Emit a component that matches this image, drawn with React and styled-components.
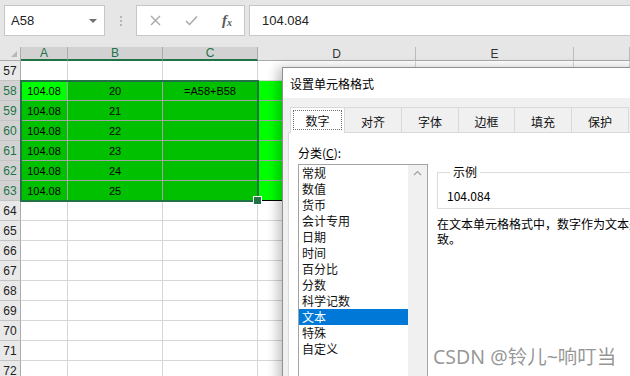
import React from 'react';
import styled, { createGlobalStyle } from 'styled-components';

const Global = createGlobalStyle`
  html, body { margin: 0; padding: 0; background: #fff; }
  * { box-sizing: border-box; }
`;

const Root = styled.div`
  position: relative;
  width: 630px;
  height: 376px;
  overflow: hidden;
  background: #e6e6e6;
  display: flex;
  flex-direction: column;
  font-family: "Liberation Sans", Arial, sans-serif;
`;

/* ---------- formula bar ---------- */
const FormulaBar = styled.div`
  flex: none;
  height: 36px;
  display: flex;
  align-items: stretch;
  padding: 5px 0 0 4px;
`;

const Field = styled.div`
  background: #fff;
  border: 1px solid #c6c6c6;
  display: flex;
  align-items: center;
`;

const NameBox = styled(Field)`
  width: 101px;
  justify-content: space-between;
  padding: 0 7px 0 6px;
  font-size: 13px;
  color: #222;
`;

const Caret = styled.span`
  width: 0;
  height: 0;
  border-left: 4px solid transparent;
  border-right: 4px solid transparent;
  border-top: 4px solid #707070;
`;

const Grip = styled.div`
  width: 31px;
  display: flex;
  flex-direction: column;
  align-items: center;
  justify-content: center;
  gap: 2px;
  span { width: 2px; height: 2px; background: #b5b5b5; }
`;

const FxBox = styled(Field)`
  width: 109px;
  display: grid;
  grid-template-columns: repeat(3, 36px);
  align-items: center;
  justify-items: center;
`;

const Fx = styled.span`
  font-family: "Liberation Serif", "Times New Roman", serif;
  font-style: italic;
  font-weight: bold;
  font-size: 15px;
  color: #5a5a5a;
  sub { font-size: 10px; vertical-align: -1px; }
`;

const FormulaInput = styled(Field)`
  flex: 1;
  margin-left: 4px;
  border-right: none;
  padding-left: 12px;
  font-size: 13px;
  color: #222;
`;

/* ---------- sheet ---------- */
const Sheet = styled.div`
  position: relative;
  flex: 1;
  margin-top: 11px;
  display: grid;
  grid-template-columns: 21px 47px 95px 95px 158px 158px 1fr;
  grid-template-rows: 14px;
  grid-auto-rows: 20px;
  align-content: start;
  background: #fff;
  overflow: hidden;
`;

const Corner = styled.div`
  position: relative;
  background: #e6e6e6;
  border-right: 1px solid #ababab;
  border-bottom: 1px solid #ababab;
  &::after {
    content: "";
    position: absolute;
    right: 3px;
    bottom: 3px;
    width: 0;
    height: 0;
    border-left: 6px solid transparent;
    border-bottom: 6px solid #b8b8b8;
  }
`;

const ColHead = styled.div`
  display: flex;
  align-items: center;
  justify-content: center;
  font-size: 12px;
  background: ${p => (p.$sel ? '#d2d2d2' : '#e6e6e6')};
  color: ${p => (p.$sel ? '#217346' : '#333')};
  border-right: 1px solid ${p => (p.$sel ? '#ababab' : '#bcbcbc')};
  border-bottom: ${p => (p.$sel ? '2px solid #217346' : '1px solid #ababab')};
`;

const RowHead = styled.div`
  display: flex;
  align-items: flex-end;
  justify-content: center;
  padding-bottom: 2px;
  font-size: 12px;
  background: ${p => (p.$sel ? '#d2d2d2' : '#e9e9e9')};
  color: ${p => (p.$sel ? '#217346' : '#222')};
  border-right: 1px solid ${p => (p.$sel ? '#217346' : '#ababab')};
  border-bottom: 1px solid #c4c4c4;
`;

const toneBg = { sel: '#00c000', fill: '#00ff00' };

const Cell = styled.div`
  display: flex;
  align-items: center;
  justify-content: center;
  padding-top: 1px;
  font-size: 11px;
  color: #000;
  white-space: nowrap;
  background: ${p => toneBg[p.$tone] || '#fff'};
  border-right: 1px solid ${p => (p.$tone ? '#a4a4a4' : '#d6d6d6')};
  border-bottom: 1px solid ${p => (p.$black ? '#000' : p.$tone ? '#a4a4a4' : '#d6d6d6')};
`;

const Selection = styled.div`
  position: absolute;
  grid-column: 2 / 5;
  grid-row: 3 / 9;
  top: -1px;
  left: -1px;
  right: -1px;
  bottom: -1px;
  border: 2px solid #217346;
  pointer-events: none;
  &::after {
    content: "";
    position: absolute;
    right: -5px;
    bottom: -5px;
    width: 7px;
    height: 7px;
    background: #217346;
    border: 1px solid #fff;
  }
`;

/* ---------- dialog ---------- */
const Dialog = styled.div`
  position: absolute;
  left: 282px;
  top: 67px;
  width: 480px;
  height: 330px;
  display: flex;
  flex-direction: column;
  background: #f0f0f0;
  border-left: 1px solid #8f8f8f;
  border-top: 1px solid #8f8f8f;
  box-shadow: -5px 0 10px rgba(0, 0, 0, 0.22);
  font-family: "Noto Sans CJK SC", "Noto Sans", sans-serif;
  font-size: 12px;
  color: #000;
`;

const TitleBar = styled.div`
  flex: none;
  height: 30px;
  display: flex;
  align-items: center;
  padding-left: 7px;
  background: #fff;
  font-size: 12px;
`;

const TabStrip = styled.div`
  flex: none;
  position: relative;
  z-index: 1;
  display: flex;
  align-items: flex-end;
  padding: 9px 0 0 7px;
`;

const Tab = styled.div`
  width: ${p => p.$w}px;
  height: ${p => (p.$active ? 26 : 25)}px;
  margin-bottom: ${p => (p.$active ? -1 : 0)}px;
  margin-left: -1px;
  &:first-child { margin-left: 0; }
  display: flex;
  align-items: stretch;
  padding: ${p => (p.$active ? '2px 2px 3px' : '2px 0 0')};
  background: ${p => (p.$active ? '#fff' : '#f0f0f0')};
  border: 1px solid #d9d9d9;
  border-bottom: none;
  color: #111;
`;

const TabLabel = styled.span`
  flex: 1;
  display: flex;
  align-items: center;
  justify-content: center;
  border: 1px dotted ${p => (p.$focus ? '#707070' : 'transparent')};
`;

const Panel = styled.div`
  flex: 1;
  margin-left: 5px;
  display: flex;
  gap: 9px;
  padding: 12px 0 0 9px;
  background: #fff;
  border: 1px solid #d9d9d9;
`;

const LeftCol = styled.div`
  flex: none;
  width: 130px;
  display: flex;
  flex-direction: column;
`;

const Label = styled.div`
  line-height: 16px;
  u { text-decoration: underline; }
`;

const ListBox = styled.div`
  margin-top: 3px;
  height: 240px;
  display: flex;
  border: 1px solid #a3a3a3;
`;

const Items = styled.div`
  flex: 1;
  display: flex;
  flex-direction: column;
`;

const Item = styled.div`
  height: 16px;
  line-height: 16px;
  padding-left: 3px;
  background: ${p => (p.$sel ? '#0078d7' : 'transparent')};
  color: ${p => (p.$sel ? '#fff' : '#111')};
`;

const ScrollTrack = styled.div`
  width: 19px;
  background: #f0f0f0;
  display: flex;
  justify-content: center;
  padding-top: 5px;
`;

const RightCol = styled.div`
  flex: none;
  width: 442px;
  margin-top: 19px;
  display: flex;
  flex-direction: column;
`;

const Group = styled.fieldset`
  margin: 0;
  padding: 8px 0 4px 9px;
  border: 1px solid #dcdcdc;
  min-width: 0;
`;

const Legend = styled.legend`
  padding: 0 3px;
  margin-left: 3px;
  line-height: 16px;
`;

const Sample = styled.div`
  line-height: 16px;
`;

const Desc = styled.p`
  margin: 7px 0 0;
  line-height: 15px;
`;

const Watermark = styled.div`
  position: absolute;
  left: 433px;
  top: 345px;
  font-family: "Noto Sans", "Noto Sans CJK SC", sans-serif;
  font-size: 19.5px;
  line-height: 24px;
  color: rgba(110, 110, 110, 0.72);
  white-space: nowrap;
  pointer-events: none;
`;

/* ---------- data ---------- */
const COLS = [
  { key: 'A', sel: true },
  { key: 'B', sel: true },
  { key: 'C', sel: true },
  { key: 'D' },
  { key: 'E' },
  { key: '' },
];

const ROWS = Array.from({ length: 16 }, (_, i) => 57 + i);
const DATA = {
  58: ['104.08', '20', '=A58+B58'],
  59: ['104.08', '21', ''],
  60: ['104.08', '22', ''],
  61: ['104.08', '23', ''],
  62: ['104.08', '24', ''],
  63: ['104.08', '25', ''],
};

const TABS = [
  ['数字', 55],
  ['对齐', 58],
  ['字体', 58],
  ['边框', 57],
  ['填充', 58],
  ['保护', 58],
];

const CATEGORIES = ['常规', '数值', '货币', '会计专用', '日期', '时间', '百分比', '分数', '科学记数', '文本', '特殊', '自定义'];

function toneFor(row, ci) {
  const filled = row >= 58 && row <= 63;
  if (!filled || ci > 3) return undefined;
  if (ci === 3) return 'fill';
  if (row === 58 && ci === 0) return 'fill';
  return 'sel';
}

const Cross = () => (
  <svg width="11" height="11" viewBox="0 0 11 11">
    <path d="M1 1L10 10M10 1L1 10" stroke="#a8a8a8" strokeWidth="1.4" fill="none" />
  </svg>
);

const Check = () => (
  <svg width="13" height="11" viewBox="0 0 13 11">
    <path d="M1 6L4.5 9.5L12 1.5" stroke="#a8a8a8" strokeWidth="1.5" fill="none" />
  </svg>
);

const ChevronUp = () => (
  <svg width="9" height="6" viewBox="0 0 9 6">
    <path d="M1 5L4.5 1.5L8 5" stroke="#a0a0a0" strokeWidth="1.2" fill="none" />
  </svg>
);

export default function App() {
  return (
    <Root>
      <Global />
      <FormulaBar>
        <NameBox>
          <span>A58</span>
          <Caret />
        </NameBox>
        <Grip>
          <span />
          <span />
          <span />
        </Grip>
        <FxBox>
          <Cross />
          <Check />
          <Fx>
            f<sub>x</sub>
          </Fx>
        </FxBox>
        <FormulaInput>104.084</FormulaInput>
      </FormulaBar>

      <Sheet>
        <Corner />
        {COLS.map((c, i) => (
          <ColHead key={i} $sel={c.sel}>
            {c.key}
          </ColHead>
        ))}
        {ROWS.map(r => (
          <React.Fragment key={r}>
            <RowHead $sel={r >= 58 && r <= 63}>{r}</RowHead>
            {COLS.map((c, ci) => (
              <Cell key={ci} $tone={toneFor(r, ci)} $black={r === 63 && ci === 3}>
                {DATA[r] && ci < 3 ? DATA[r][ci] : ''}
              </Cell>
            ))}
          </React.Fragment>
        ))}
        <Selection />
      </Sheet>

      <Dialog>
        <TitleBar>设置单元格格式</TitleBar>
        <TabStrip>
          {TABS.map(([t, w], i) => (
            <Tab key={t} $w={w} $active={i === 0}>
              <TabLabel $focus={i === 0}>{t}</TabLabel>
            </Tab>
          ))}
        </TabStrip>
        <Panel>
          <LeftCol>
            <Label>
              分类(<u>C</u>):
            </Label>
            <ListBox>
              <Items>
                {CATEGORIES.map(c => (
                  <Item key={c} $sel={c === '文本'}>
                    {c}
                  </Item>
                ))}
              </Items>
              <ScrollTrack>
                <ChevronUp />
              </ScrollTrack>
            </ListBox>
          </LeftCol>
          <RightCol>
            <Group>
              <Legend>示例</Legend>
              <Sample>104.084</Sample>
            </Group>
            <Desc>在文本单元格格式中，数字作为文本处理。单元格显示的内容与输入的内容完全一致。</Desc>
          </RightCol>
        </Panel>
      </Dialog>

      <Watermark>CSDN @铃儿~响叮当</Watermark>
    </Root>
  );
}
